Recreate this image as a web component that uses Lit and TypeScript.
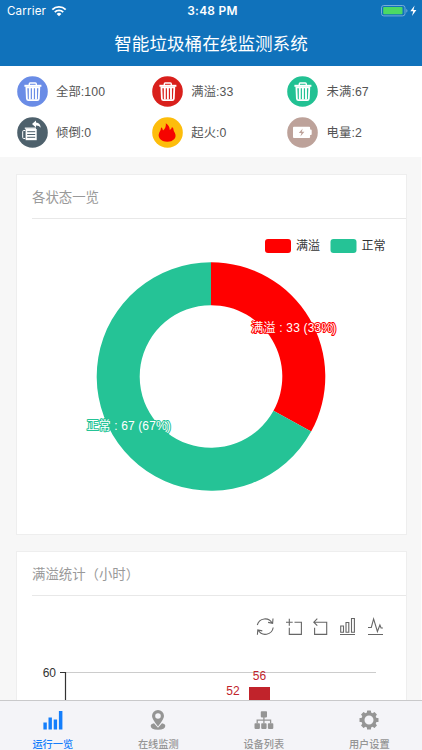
import { LitElement, html, css, svg } from "lit";
import { customElement, property } from "lit/decorators.js";

const trash = svg`
  <path d="M7.400 8.800h17v2h-17z" fill="#fff"/>
  <path d="M12.300 9V7.900q0-.9.900-.9h5.200q.9 0 .9.900V9" fill="none" stroke="#fff" stroke-width="1.400"/>
  <path d="M9.400 11.300H22.300L21.800 22.700q-.1 1.500-1.600 1.500h-8.700q-1.500 0-1.600-1.500z" fill="none" stroke="#fff" stroke-width="1.800"/>
  <path d="M12.800 12v11.500M15.900 12v11.500M19 12v11.500" stroke="#fff" stroke-width="1.900"/>`;

const dump = svg`
  <path d="M8.600 12h11.100v11.200H8.600z" fill="#fff"/>
  <path d="M7.800 11.200h11.200" stroke="#fff" stroke-width="1.300"/>
  <path d="M8.300 13.500H6.700q-1 0-1 1v6q0 1 1 1h1.600" fill="none" stroke="#fff" stroke-width="1"/>
  <path d="M10.200 14.700h8M10.200 17.500h8M10.200 20.300h8" stroke="#4e616c" stroke-width="1"/>
  <path d="M15 6.900 19 3.400v2q4.500.4 4.700 5.400-1.500-2.400-4.700-2.300v2z" fill="#fff"/>`;

const fire = svg`<path fill="#f60400" d="M13.800 6.200q3.700 2 4 6.700 1.800-.7 2.200-2.900l1.200 1.300q.3 2.700 1.700 4.700 1.700 3.600-.8 6.300-2.400 2.500-6.700 2.500-5.200 0-7.500-3-2.200-3.100-.6-6.400 1.800-2.600 1.800-5.200 1.600.9 1.900 3.400 3.500-3 2.800-7.400z"/>`;

const battery = svg`
  <path fill="#fff" d="M6.900 9.800h15.300q.9 0 .9.900v1.900h.8q.8 0 .8.800v3.900q0 .8-.8.800h-.8v2q0 .9-.9.900H6.900q-.9 0-.9-.9v-9.400q0-.9.900-.9z"/>
  <path d="M15.700 11.500 11.800 16h2.600l-1 3.500 4-4.700h-2.600z" fill="#bda29a"/>`;

const stats = [
  { label: "全部:100", color: "#6a8ce6", icon: trash },
  { label: "满溢:33", color: "#d9201c", icon: trash },
  { label: "未满:67", color: "#22c193", icon: trash },
  { label: "倾倒:0", color: "#4e616c", icon: dump },
  { label: "起火:0", color: "#fdbd0b", icon: fire },
  { label: "电量:2", color: "#bda29a", icon: battery },
];

const tabs = [
  { label: "运行一览", icon: svg`<path d="M1.400 13.500H4.800V20.500H1.400zM6.500 8.600h3.400v11.900H6.500zM11.700 10.500h3.400v10h-3.400zM16.900 2h3.500v18.500h-3.500z"/>` },
  { label: "在线监测", icon: svg`
    <path fill-rule="evenodd" d="M11 .9a6 6 0 0 1 6 6q0 3-6 10.500Q5 9.900 5 6.900a6 6 0 0 1 6-6zm0 3.300a2.800 2.800 0 1 0 0 5.600 2.800 2.800 0 0 0 0-5.600z"/>
    <path d="M7 14.200q-3.300.7-3.300 2.800 0 3.700 7.300 3.700t7.300-3.700q0-2.100-3.300-2.800l-4 4.600z"/>` },
  { label: "设备列表", icon: svg`
    <rect x="7.800" y="2.200" width="6.200" height="6.200" rx=".8"/>
    <rect x="1.500" y="14.300" width="5.400" height="5.600" rx=".8"/><rect x="8.200" y="14.300" width="5.400" height="5.600" rx=".8"/><rect x="14.900" y="14.300" width="5.400" height="5.600" rx=".8"/>
    <path d="M10.900 8v6.500M4.200 14.500v-3.400h13.400v3.400" fill="none" stroke="currentColor" stroke-width="1.300"/>` },
  { label: "用户设置", icon: svg`
    <circle cx="11" cy="11" r="6.100" fill="none" stroke="currentColor" stroke-width="3.200"/>
    ${[0, 45, 90, 135, 180, 225, 270, 315].map((a) => svg`<rect x="9" y="1.500" width="4" height="3" rx=".6" transform="rotate(${a} 11 11)"/>`)}` },
];

@customElement("status-bar")
class StatusBar extends LitElement {
  static styles = css`
    :host { display: grid; grid-template-columns: 1fr auto 1fr; align-items: center; height: 22px; padding: 0 5px 0 7px; color: #fff; font: 11.600px/22px Inter, sans-serif; }
    .left, .right { display: flex; align-items: center; }
    .left { gap: 5px; letter-spacing: .15px; }
    .time { font-weight: 600; letter-spacing: .3px; font-size: 11.900px; padding-left: 1px; }
    .right { justify-content: flex-end; }
    svg { display: block; }
  `;
  render() {
    return html`
      <div class="left"><span>Carrier</span>
        <svg width="16" height="12" viewBox="0 0 16 12" fill="none" stroke="#fff" stroke-width="1.900">
          <path d="M1.300 4.600a9.600 9.600 0 0 1 13.400 0M3.800 7.100a6 6 0 0 1 8.400 0"/>
          <path d="M8 11.300 5.600 8.900a3.400 3.400 0 0 1 4.800 0z" fill="#fff" stroke="none"/>
        </svg>
      </div>
      <div class="time">3:48 PM</div>
      <div class="right">
        <svg width="36" height="12" viewBox="0 0 36 12">
          <rect x=".5" y=".5" width="23.500" height="10.400" rx="2.300" fill="none" stroke="#76acd8"/>
          <rect x="2.200" y="2.100" width="19.300" height="7.200" rx=".8" fill="#4cd964"/>
          <path d="M25.300 3.700q1.200.8 1.200 2t-1.200 2z" fill="#76acd8"/>
          <path d="M33.600.5 29.300 6.200h2.900L31 11l4.400-6h-2.900z" fill="#fff"/>
        </svg>
      </div>`;
  }
}

@customElement("panel-card")
class PanelCard extends LitElement {
  @property() heading = "";
  static styles = css`
    :host { display: block; box-sizing: border-box; background: #fff; border: 1px solid #eee; padding: 0 15px; }
    .heading { height: 43px; line-height: 46px; border-bottom: 1px solid #e8e8e8; color: #999; font-size: 13.400px; margin-right: -15px; }
    .body { margin: 0 -15px; }
  `;
  render() {
    return html`<div class="heading">${this.heading}</div><div class="body"><slot></slot></div>`;
  }
}

@customElement("state-donut")
class StateDonut extends LitElement {
  static styles = css`
    :host, svg { display: block; }
    text { font: 12px "Liberation Sans", "Noto Sans CJK SC", sans-serif; }
    .legend { fill: #333; }
    .label { fill: #fff; stroke-width: 2; stroke-linejoin: round; paint-order: stroke; }
    .full { stroke: #f00; }
    .normal { stroke: #25c396; }
  `;
  private arc(from: number, to: number, color: string) {
    const cx = 194, cy = 157.500, R = 114.300, r = 71.300;
    const pt = (f: number, rad: number) => {
      const a = f * Math.PI * 2;
      return `${cx + rad * Math.sin(a)} ${cy - rad * Math.cos(a)}`;
    };
    const big = to - from > 0.5 ? 1 : 0;
    return svg`<path fill=${color} d="M${pt(from, R)}A${R} ${R} 0 ${big} 1 ${pt(to, R)}L${pt(to, r)}A${r} ${r} 0 ${big} 0 ${pt(from, r)}Z"/>`;
  }
  render() {
    return html`<svg width="388" height="314" viewBox="0 0 388 314">
      <rect x="248" y="20" width="26" height="14" rx="3" fill="#f00"/>
      <text class="legend" x="279" y="31.300">满溢</text>
      <rect x="313.500" y="20" width="26" height="14" rx="3" fill="#25c396"/>
      <text class="legend" x="344.500" y="31.300">正常</text>
      ${this.arc(0, 0.33, "#f00")}${this.arc(0.33, 1, "#25c396")}
      <text class="label full" x="234.300" y="113.300" textLength="85">满溢 : 33 (33%)</text>
      <text class="label normal" x="69.700" y="211" textLength="84">正常 : 67 (67%)</text>
    </svg>`;
  }
}

@customElement("overflow-chart")
class OverflowChart extends LitElement {
  static styles = css`
    :host, svg { display: block; }
    text { font: 12px "Liberation Sans", sans-serif; }
    .axis { fill: #333; }
    .value { fill: #c1232b; }
    .tool { fill: none; stroke: #666; stroke-width: 1.100; }
  `;
  render() {
    return html`<svg width="388" height="300" viewBox="0 0 388 300">
      <g class="tool">
        <path d="M240.300 29a8 8 0 0 1 14.900-1.700M256.200 31.500a8 8 0 0 1-15 2.500M256 22.500l-.4 4.800-4.500-.9M240.400 38.800l.4-4.800 4.500.9"/>
        <path d="M272.300 22.700v7M269 26.200h6.700M277.500 26.200h6.900v12.200h-12.100v-6.700"/>
        <path d="M297 26.200h12.700v12.200h-12.100v-6.700M300.300 22.700l-3.500 3.500 3.500 3.500"/>
        <path d="M323.700 30h2.800v6.200h-2.800zM329 26.500h2.800v9.700H329zM334.500 22.500h2.900v13.700h-2.900zM323 38.500h15"/>
        <path d="M351 31.500h3.300l2.300-8.600 3.800 12.600 2.500-6.500 1.200 3h1.800M351 38.500h15"/>
      </g>
      <path d="M48 76.500h311" stroke="#ccc"/>
      <path d="M43 76.500h5.500V300" fill="none" stroke="#333" stroke-width="1.200"/>
      <text class="axis" x="39" y="81" text-anchor="end">60</text>
      <rect x="232" y="91" width="21" height="209" fill="#c1232b"/>
      <text class="value" x="242.500" y="84" text-anchor="middle">56</text>
      <text class="value" x="216" y="99" text-anchor="middle">52</text>
    </svg>`;
  }
}

@customElement("app-root")
class AppRoot extends LitElement {
  static styles = css`
    :host { display: flex; flex-direction: column; height: 750px; overflow: hidden; background: #f7f7f7; font-family: "Liberation Sans", "Noto Sans CJK SC", sans-serif; }
    .top { flex: none; height: 66px; background: #1072bb; }
    .title { color: #fff; font-size: 17.600px; line-height: 44px; text-align: center; }
    .stats { flex: none; box-sizing: border-box; height: 91px; background: #fff; display: grid; grid-template-columns: repeat(3, 135.300px); grid-template-rows: 31px 31px; row-gap: 10px; padding: 9.500px 0 0 16.500px; }
    .stat { display: flex; align-items: center; gap: 8.500px; color: #555; font-size: 12.300px; line-height: 31px; letter-spacing: .1px; }
    .stat span { padding-top: 2px; }
    .badge { width: 31px; height: 31px; }
    .content { flex: 1; min-height: 0; overflow: hidden; display: flex; flex-direction: column; gap: 16px; padding: 17px 14px 0 16px; border-right: 1px solid #fdfdfd; }
    .card { flex: none; }
    .first { height: 361px; }
    .second { height: 340px; }
    .tabs { flex: none; box-sizing: border-box; height: 50px; border-top: 1px solid #c9c9cb; background: #f4f4f8; display: grid; grid-template-columns: repeat(4, 1fr); }
    .tab { display: flex; flex-direction: column; align-items: center; color: #959595; font-size: 10.200px; font-weight: 500; line-height: 15px; padding-top: 8px; gap: 6px; }
    .tab svg { display: block; fill: currentColor; }
    .tab.active { color: #147efb; }
  `;
  render() {
    return html`
      <div class="top"><status-bar></status-bar><div class="title">智能垃圾桶在线监测系统</div></div>
      <div class="stats">${stats.map((s) => html`
        <div class="stat">
          <svg class="badge" viewBox="0 0 31 31"><circle cx="15.500" cy="15.500" r="15.300" fill=${s.color}></circle>${s.icon}</svg>
          <span>${s.label}</span>
        </div>`)}
      </div>
      <div class="content">
        <panel-card class="card first" heading="各状态一览"><state-donut></state-donut></panel-card>
        <panel-card class="card second" heading="满溢统计（小时）"><overflow-chart></overflow-chart></panel-card>
      </div>
      <div class="tabs">${tabs.map((t, i) => html`
        <div class=${i === 0 ? "tab active" : "tab"}><svg width="22" height="22" viewBox="0 0 22 22">${t.icon}</svg><span>${t.label}</span></div>`)}
      </div>`;
  }
}
